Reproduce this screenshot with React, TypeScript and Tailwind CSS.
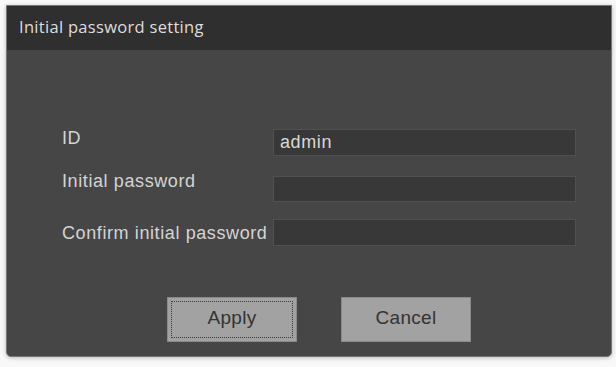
import React from "react";

const rows = [
  { label: "ID", value: "admin", labelTop: "mt-0", inputTop: "mt-[1px]", inputH: "h-[27px]", rowTop: "mt-[78px]" },
  { label: "Initial password", value: "", labelTop: "mt-0", inputTop: "mt-[5px]", inputH: "h-[26px]", rowTop: "mt-[15px]" },
  { label: "Confirm initial password", value: "", labelTop: "mt-[4px]", inputTop: "mt-0", inputH: "h-[27px]", rowTop: "mt-[17px]" },
];

export default function App() {
  return (
    <div className="w-[616px] h-[367px] bg-[#f8f8f8] pl-[6px] pt-[5px]">
      <div
        className="w-[606px] h-[352px] rounded-b-[5px] border border-[#767676] bg-[#464646] shadow-[0_1px_4px_rgba(0,0,0,0.25)] flex flex-col overflow-hidden"
        style={{ fontFamily: '"Liberation Sans", Arial, sans-serif' }}
      >
        <div
          className="h-[44px] bg-[#2f2f2f] pl-[12px] pt-[11px] text-[16.5px] leading-[20px] tracking-[0.3px] text-[#dedede]"
          style={{ fontFamily: '"Open Sans", "Noto Sans", sans-serif' }}
        >
          Initial password setting
        </div>

        <div className="flex flex-col pl-[55px]">
          {rows.map((row) => (
            <div key={row.label} className={`flex items-start ${row.rowTop}`}>
              <div className={`w-[211px] text-[18px] leading-[20px] tracking-[0.6px] text-[#d4d4d4] whitespace-nowrap ${row.labelTop}`}>
                {row.label}
              </div>
              <div
                className={`w-[303px] ${row.inputH} ${row.inputTop} border border-[#505050] bg-[#383838] pl-[6px] pt-[2px] text-[18px] leading-[20px] tracking-[0.6px] text-[#d8d8d8]`}
              >
                {row.value}
              </div>
            </div>
          ))}

          <div className="flex mt-[51px] pl-[105px] gap-[44px]">
            <button
              type="button"
              className="w-[130px] h-[45px] border border-[#8a8a8a] bg-[#a2a2a2] text-[19px] tracking-[0.3px] text-[#333333] outline-1 outline-dotted outline-[#3a3a3a] outline-offset-[-5px] pb-[2px]"
            >
              Apply
            </button>
            <button
              type="button"
              className="w-[130px] h-[45px] border border-[#8a8a8a] bg-[#a2a2a2] text-[19px] tracking-[0.3px] text-[#333333] pb-[2px]"
            >
              Cancel
            </button>
          </div>
        </div>
      </div>
    </div>
  );
}
